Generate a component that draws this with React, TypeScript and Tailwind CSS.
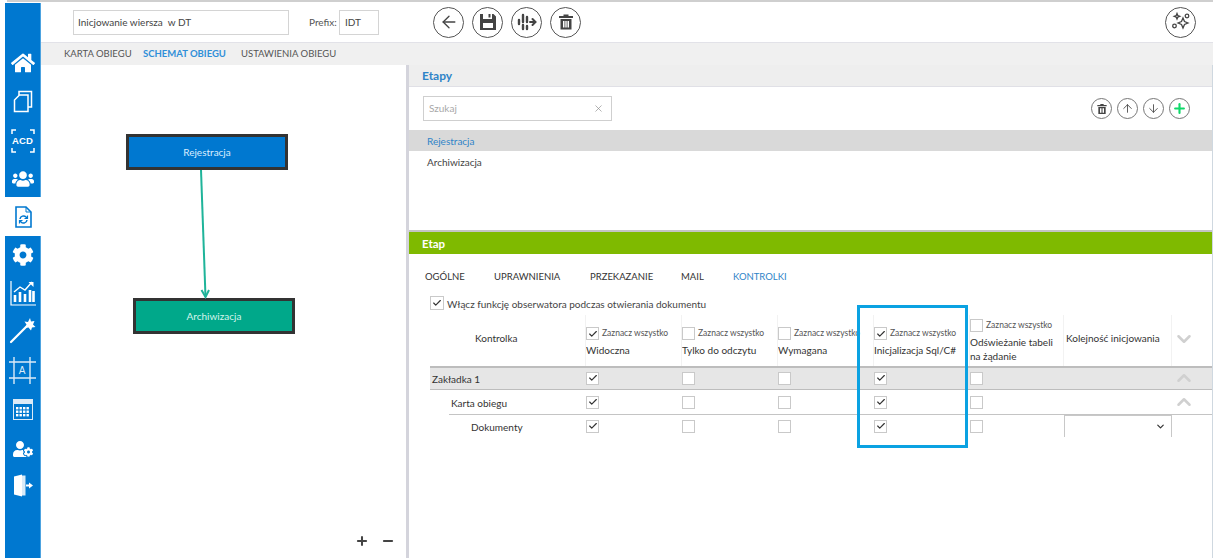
import React from "react";
import { FaHome, FaUsers, FaCog, FaUserCog } from "react-icons/fa";
import { ArrowLeft, ArrowUp, ArrowDown, ChevronDown, ChevronUp, X, Check, Plus, Minus } from "lucide-react";

const font = { fontFamily: 'Lato,"Open Sans",sans-serif' };

function Box({ on, size = "s" }: { on?: boolean; size?: "s" | "m" }) {
  return (
    <span className={"flex items-center justify-center border border-[#c9c9c9] bg-white shrink-0 " + (size === "s" ? "w-[13px] h-[13px]" : "w-[14px] h-[14px]")}>
      {on && <Check size={10} strokeWidth={2.8} className="text-[#333]" />}
    </span>
  );
}

function Round({ children, big }: { children: React.ReactNode; big?: boolean }) {
  return (
    <span className={"flex items-center justify-center rounded-full bg-white text-[#444] " + (big ? "w-[31px] h-[31px] border-[1.5px] border-[#555]" : "w-[21px] h-[21px] border-[1.5px] border-[#777]")}>
      {children}
    </span>
  );
}

function Bin({ size }: { size: number }) {
  return (
    <svg width={size} height={size} viewBox="0 0 18 18" fill="currentColor">
      <path d="M6.500 1.500h5V3H16v2H2V3h4.500z" />
      <path d="M3.500 6h11v10.500h-11zM6 8v6.500h1.500V8zM8.300 8v6.500h1.400V8zM10.500 8v6.500H12V8z" fillRule="evenodd" />
    </svg>
  );
}

function NavIcon({ children, cls }: { children: React.ReactNode; cls: string }) {
  return <div className={"flex items-center justify-center text-white " + cls}>{children}</div>;
}

const Sidebar = () => (
  <aside className="w-[36px] shrink-0 mt-[1px] bg-[#0078d0] flex flex-col pt-[41px] border-r border-[#4da3e0]">
    <NavIcon cls="h-[38px]"><FaHome size={24} /></NavIcon>
    <NavIcon cls="h-[39px]">
      <svg width="20" height="23" viewBox="0 0 20 23" fill="none" stroke="currentColor" strokeWidth="1.5">
        <path d="M6 5V1.500h12.500V17H15" />
        <path d="M6.500 5H15v16.500H1.500V10z" />
      </svg>
    </NavIcon>
    <NavIcon cls="h-[39px]">
      <div className="relative w-[24px] h-[24px] flex items-center justify-center">
        <svg className="absolute inset-0" width="24" height="24" viewBox="0 0 24 24" fill="none" stroke="currentColor" strokeWidth="1.5">
          <path d="M1 5V1h4M19 1h4v4M1 19v4h4M19 23h4v-4" />
        </svg>
        <span className="text-[9.500px] font-bold leading-none tracking-[0.2px]" style={{ fontFamily: '"Liberation Sans",sans-serif' }}>ACD</span>
      </div>
    </NavIcon>
    <NavIcon cls="h-[37px]"><FaUsers size={22} /></NavIcon>
    <div className="h-[39px] -mr-px relative bg-white text-[#0078d0] flex items-center justify-center">
      <svg width="17" height="22" viewBox="0 0 17 22" fill="none" stroke="currentColor" strokeWidth="1.6">
        <path d="M1 1h10l5 5v15H1z" />
        <path d="M11 1v5h5" strokeWidth="1" />
        <path d="M5 13a3.500 3.500 0 0 1 6-2l1 1M12 14a3.500 3.500 0 0 1-6 2l-1-1" strokeWidth="1.500" />
        <path d="M12.500 9.500v3h-3M4.500 17.500v-3h3" strokeWidth="1.200" />
      </svg>
    </div>
    <NavIcon cls="h-[38px]"><FaCog size={22} /></NavIcon>
    <NavIcon cls="h-[37px]">
      <svg width="26" height="26" viewBox="0 0 26 26" fill="none" stroke="currentColor">
        <path d="M1 1v24h25" strokeWidth="1.200" />
        <path d="M5 22v-7M10 22v-10M15 22v-8M20 22v-12M23.500 22V11" strokeWidth="2.600" />
        <path d="M4 12l6-5 5 3 7-8" strokeWidth="1.400" />
        <path d="M18.500 2h5v5z" fill="currentColor" stroke="none" />
      </svg>
    </NavIcon>
    <NavIcon cls="h-[39px]">
      <svg width="27" height="27" viewBox="0 0 27 27" fill="none" stroke="currentColor">
        <path d="M2 25L18 9" strokeWidth="2.200" strokeLinecap="round" />
        <path d="M21 1l1 3.500 3.500-.5-1.500 3.500 2.500 2.500-3.500.5-1 3-2.500-3-3.500.5 1.500-3.500-2-3 3.500.5z" fill="currentColor" stroke="none" />
      </svg>
    </NavIcon>
    <NavIcon cls="h-[41px]">
      <svg width="27" height="27" viewBox="0 0 27 27" fill="none" stroke="#dbeaf7" strokeWidth="1.400">
        <path d="M0 5h27M0 21h27M5 0v27M21 0v27" />
        <text x="13" y="17" textAnchor="middle" fontSize="10" fill="#dbeaf7" stroke="none" style={{ fontFamily: '"Liberation Sans",sans-serif' }}>A</text>
      </svg>
    </NavIcon>
    <NavIcon cls="h-[37px]">
      <svg width="20" height="21" viewBox="0 0 20 21">
        <rect x="0.500" y="0.500" width="19" height="20" fill="none" stroke="#dbeaf7" />
        <rect x="0" y="0" width="20" height="5" fill="#dbeaf7" />
        {[8, 11.5, 15].map((y) => [3, 6.5, 10, 13.5].map((x) => <rect key={x + "-" + y} x={x} y={y} width="2.400" height="2.400" fill="#fff" />))}
      </svg>
    </NavIcon>
    <NavIcon cls="h-[41px]"><FaUserCog size={20} /></NavIcon>
    <NavIcon cls="h-[33px]">
      <svg width="20" height="23" viewBox="0 0 20 23" fill="currentColor">
        <path d="M1 2.500L9 0.500v22L1 20.500z" />
        <path d="M9 1.500h3.500v20H9z" opacity="0.85" />
        <path d="M13 10.500h3V8.500l4 3-4 3v-2h-3z" />
      </svg>
    </NavIcon>
  </aside>
);

const TopBar = () => (
  <div className="h-[40px] flex items-center shrink-0 pl-[32px] pr-[17px]">
    <div className="w-[216px] h-[25px] border border-[#d4d4d4] flex items-center pl-[4px] text-[10px] text-[#444]">Inicjowanie wiersza&nbsp; w DT</div>
    <span className="ml-[20px] w-[30px] text-[10px] text-[#555]">Prefix:</span>
    <div className="w-[40px] h-[25px] border border-[#d4d4d4] flex items-center pl-[5px] text-[10px] text-[#444]">IDT</div>
    <div className="ml-[54px] flex gap-[8px]">
      <Round big><ArrowLeft size={20} strokeWidth={1.6} /></Round>
      <Round big>
        <svg width="18" height="18" viewBox="0 0 18 18" fill="currentColor">
          <path fillRule="evenodd" d="M1 1h3v5h9V1h1.500L17 3.500V17H1zM4 10v5h10v-5z" />
          <path d="M9.500 1h2v3.500h-2z" />
        </svg>
      </Round>
      <Round big>
        <svg width="20" height="18" viewBox="0 0 20 18" fill="none" stroke="currentColor" strokeLinecap="round">
          <path d="M2 7v4M6 2v7M6 12v4M10 4v5M10 13v3" strokeWidth="2.400" />
          <path d="M13 9h5M15.500 6l3 3-3 3" strokeWidth="2" />
        </svg>
      </Round>
      <Round big><Bin size={18} /></Round>
    </div>
    <div className="ml-auto">
      <Round big>
        <svg width="22" height="22" viewBox="0 0 22 22" fill="none" stroke="currentColor" strokeWidth="1.300">
          <path d="M13 7l1.500 3.500L18 12l-3.500 1.500L13 17l-1.500-3.500L8 12l3.500-1.500z" />
          <path d="M7 2.500l.8 2 2 .8-2 .8-.8 2-.8-2-2-.8 2-.8z" />
          <circle cx="17" cy="5" r="1.800" />
          <circle cx="4.500" cy="15" r="1.800" />
        </svg>
      </Round>
    </div>
  </div>
);

const TabBar = () => (
  <div className="h-[23px] shrink-0 bg-[#f0f0f0] border-t border-[#e2e2e8] flex items-center pl-[23px] text-[9.500px] text-[#555]">
    <span className="w-[79px]">KARTA OBIEGU</span>
    <span className="w-[98px] text-[#2f8fd8] font-bold">SCHEMAT OBIEGU</span>
    <span>USTAWIENIA OBIEGU</span>
  </div>
);

const Diagram = () => (
  <div className="relative w-[365px] shrink-0 bg-white">
    <div className="absolute left-[85px] top-[69px] w-[162px] h-[36px] pt-[1px] bg-[#0078d0] border-[3px] border-[#333] flex items-center justify-center text-[10px] text-[#dbeeff]">Rejestracja</div>
    <div className="absolute left-[92px] top-[233px] w-[162px] h-[36px] pt-[1px] bg-[#00a88a] border-[3px] border-[#333] flex items-center justify-center text-[10px] text-[#d5f5ec]">Archiwizacja</div>
    <svg className="absolute left-[150px] top-[105px]" width="24" height="129" viewBox="0 0 24 129" fill="none" stroke="#1fb49a" strokeWidth="2">
      <path d="M10 0l4.500 127" />
      <path d="M10.500 120l4 7 3.500-7" />
    </svg>
    <div className="absolute right-[11px] bottom-[10px] flex gap-[12px] text-[#444]">
      <Plus size={14} strokeWidth={3.5} />
      <Minus size={14} strokeWidth={3.5} />
    </div>
  </div>
);

const Stages = () => (
  <section className="h-[167px] shrink-0 flex flex-col border-b-[2px] border-[#c4c4c4]">
    <div className="h-[22px] shrink-0 bg-[#eeeeee] border-b border-[#e0e0e6] flex items-center pl-[13px] text-[12px] font-bold text-[#2f84c8]">Etapy</div>
    <div className="h-[43px] shrink-0 flex items-center pl-[14px] pr-[22px]">
      <div className="w-[189px] h-[25px] border border-[#cfcfcf] flex items-center justify-between pl-[5px] pr-[7px] text-[10px] text-[#a8a8a8]">
        <span>Szukaj</span>
        <X size={11} strokeWidth={1.4} className="text-[#888]" />
      </div>
      <div className="ml-auto flex gap-[5px]">
        <Round><Bin size={12} /></Round>
        <Round><ArrowUp size={13} strokeWidth={1.6} /></Round>
        <Round><ArrowDown size={13} strokeWidth={1.6} /></Round>
        <Round><Plus size={15} strokeWidth={3.4} className="text-[#0fd96a]" /></Round>
      </div>
    </div>
    <div className="h-[21px] shrink-0 bg-[#d9d9d9] flex items-center pl-[18px] pt-[1px] text-[10px] text-[#2f84c8]">Rejestracja</div>
    <div className="h-[21px] shrink-0 flex items-center pl-[18px] pt-[1px] text-[10px] text-[#444]">Archiwizacja</div>
  </section>
);

const cols = "grid grid-cols-[156px_96px_96px_96px_96px_94px_108px_24px]";

const Head = ({ label, on }: { label: string; on?: boolean }) => (
  <div className="flex flex-col justify-center pt-[4px] border-r border-[#f2f2f2] overflow-hidden">
    <div className="flex items-center gap-[3px] whitespace-nowrap">
      <Box on={on} />
      <span className="text-[8.500px] text-[#555]">Zaznacz wszystko</span>
    </div>
    <div className="text-[10px] text-[#333] mt-[3px] whitespace-nowrap">{label}</div>
  </div>
);

const Row = ({ label, indent, cls, select, chevron }: { label: string; indent: string; cls: string; select?: boolean; chevron?: boolean }) => (
  <div className={cols + " h-[24px] items-center " + cls}>
    <div className={"text-[10px] leading-[14px] text-[#333] pt-[2px] " + indent}>{label}</div>
    {[true, false, false, true, false].map((on, i) => <div key={i}><Box on={on} /></div>)}
    <div className="flex items-start justify-end">
      {select && (
        <div className="w-[108px] h-[22px] border-l border-r border-t border-[#c8c8c8] flex items-center justify-end pr-[5px]">
          <ChevronDown size={11} strokeWidth={2.6} className="text-[#333]" />
        </div>
      )}
    </div>
    <div className="flex justify-center h-[14px] items-center">{chevron && <ChevronUp size={22} strokeWidth={2.8} className="text-[#d0d0d0] shrink-0" />}</div>
  </div>
);

const Stage = () => (
  <section className="relative flex-1 flex flex-col">
    <div className="h-[22px] shrink-0 bg-[#7fba00] flex items-center pl-[13px] pt-[1px] text-[11.500px] font-bold text-white">Etap</div>
    <div className="h-[42px] shrink-0 flex items-center pl-[16px] pt-[5px] text-[9.500px] text-[#333]">
      <span className="w-[69px]">OGÓLNE</span>
      <span className="w-[96px]">UPRAWNIENIA</span>
      <span className="w-[91px]">PRZEKAZANIE</span>
      <span className="w-[52px]">MAIL</span>
      <span className="text-[#2f84c8]">KONTROLKI</span>
    </div>
    <div className="flex items-center gap-[3px] pl-[21px] h-[14px] text-[10px] text-[#444]">
      <Box on size="m" />
      <span className="pt-[2px]">Włącz funkcję obserwatora podczas otwierania dokumentu</span>
    </div>
    <div className="ml-[21px] mt-[5px]">
      <div className={cols + " h-[51px]"}>
        <div className="flex items-center pl-[45px] pb-[4px] text-[10px] text-[#333] border-r border-[#f2f2f2]">Kontrolka</div>
        <Head label="Widoczna" on />
        <Head label="Tylko do odczytu" />
        <Head label="Wymagana" />
        <Head label="Inicjalizacja Sql/C#" on />
        <div className="flex flex-col pt-[4px] border-r border-[#f2f2f2]">
          <div className="flex items-center gap-[3px] whitespace-nowrap">
            <Box />
            <span className="text-[8.500px] text-[#555]">Zaznacz wszystko</span>
          </div>
          <div className="text-[10px] leading-[14px] text-[#333] mt-[3px]">Odświeżanie tabeli<br />na żądanie</div>
        </div>
        <div className="flex items-center pb-[4px] text-[10px] text-[#333] whitespace-nowrap pl-[2px] border-r border-[#f2f2f2]">Kolejność inicjowania</div>
        <div className="flex items-center justify-center pb-[4px]"><ChevronDown size={22} strokeWidth={2.8} className="text-[#d0d0d0]" /></div>
      </div>
      <Row label="Zakładka 1" indent="pl-[2px]" cls="bg-[#e6e6e6] border-t-[2px] border-b border-[#bdbdbd] pb-[1px]" chevron />
      <Row label="Karta obiegu" indent="pl-[21px]" cls="" chevron />
      <div className="ml-[19px] h-px bg-[#c4c4c4]" />
      <Row label="Dokumenty" indent="pl-[41px]" cls="pb-[2px]" select />
    </div>
    <div className="absolute left-[448px] top-[73px] w-[111px] h-[143px] border-[3px] border-[#0ba2e2]" />
  </section>
);

export default function App() {
  return (
    <div className="w-[1218px] h-[558px] bg-white overflow-hidden flex flex-col" style={font}>
      <div className="h-[2px] shrink-0 ml-[7px] mr-[5px] bg-[#cfcfcf]" />
      <div className="flex-1 flex min-h-0 pl-[5px] pr-[5px]">
        <Sidebar />
        <main className="flex-1 flex flex-col min-w-0">
          <TopBar />
          <TabBar />
          <div className="flex-1 flex min-h-0">
            <Diagram />
            <div className="w-[3px] shrink-0 bg-[#d4d4dc]" />
            <div className="flex-1 flex flex-col min-w-0 border-r border-[#cfd8e0]">
              <Stages />
              <Stage />
            </div>
          </div>
        </main>
      </div>
    </div>
  );
}
